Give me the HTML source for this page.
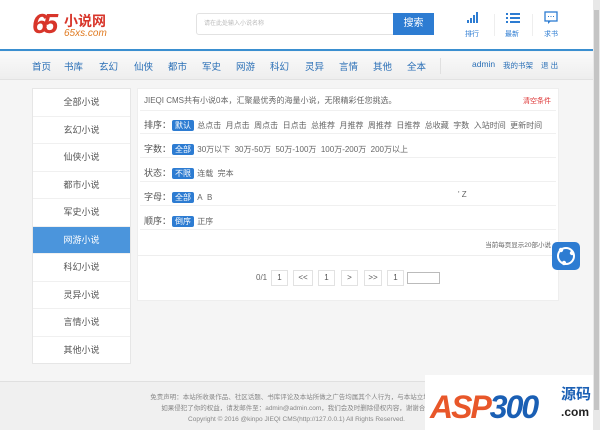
<!DOCTYPE html>
<html><head><meta charset="utf-8"><style>
*{margin:0;padding:0;box-sizing:border-box}
body{width:600px;height:430px;overflow:hidden;background:#f5f5f5;font-family:"Liberation Sans","Noto Sans CJK SC",sans-serif;font-size:9px;color:#555;position:relative}
.hdr{position:absolute;left:0;top:0;width:593px;height:51px;background:#fff;border-bottom:2px solid #3a8fd0}
.nav{position:absolute;left:0;top:52px;width:593px;height:28px;background:linear-gradient(#fafafa,#eee);border-bottom:1px solid #e2e2e2}
.nav span{position:absolute;top:7px;font-size:9.5px;color:#2a6fb6}
.sb{position:absolute;right:0;top:0;width:7px;height:430px;background:#e8e8e8}
.sb i{position:absolute;left:1px;top:10px;width:5px;height:400px;background:#c4c4c4}
.side{position:absolute;left:32px;top:88px;width:99px;height:276px;background:#fff;border:1px solid #e6e6e6}
.side div{height:27.5px;line-height:27.5px;text-align:center;border-bottom:1px solid #f0f0f0;font-size:9px;color:#555}
.side .on{background:#4b95dc;color:#fff}
.main{position:absolute;left:137px;top:88px;width:422px;height:213px;background:#fff;border:1px solid #eee}
.row{position:absolute;left:6px;font-size:8px;color:#666;white-space:nowrap}
.row b{font-weight:normal;font-size:9px;color:#555;margin-right:1px}
.row em{font-style:normal;background:#2d7cd2;color:#fff;padding:1px 3px;border-radius:2px;margin-right:1px}
.line{position:absolute;left:2px;right:2px;height:1px;background:#f0f0f0}
.pg{position:absolute;top:270px;height:16px;border:1px solid #e2e2e2;background:#fff;text-align:center;line-height:14px;font-size:8px;color:#555}
.ft{position:absolute;left:0;top:381px;width:593px;height:49px;background:#f0f0f0;border-top:1px solid #e0e0e0;text-align:center;font-size:6.5px;color:#888;line-height:11px;padding-top:10px}
</style></head><body>
<div class="hdr">
 <div style="position:absolute;left:32px;top:8px;font:italic bold 28px 'Liberation Sans',sans-serif;color:#d8352a;letter-spacing:-5px">65</div>
 <div style="position:absolute;left:64px;top:11px;font-size:14px;font-weight:bold;color:#d8352a">小说网</div>
 <div style="position:absolute;left:64px;top:28px;font:italic 10px 'Liberation Sans',sans-serif;color:#e07a20">65xs.com</div>
 <div style="position:absolute;left:196px;top:13px;width:198px;height:22px;border:1px solid #e2e2e2;border-radius:3px 0 0 3px;font-size:6px;color:#bbb;line-height:20px;padding-left:7px">请在此处输入小说名称</div>
 <div style="position:absolute;left:393px;top:13px;width:41px;height:22px;background:#2d7cd2;color:#fff;font-size:10px;line-height:22px;text-align:center">搜索</div>
 <svg style="position:absolute;left:466px;top:12px" width="14" height="12"><rect x="1" y="8" width="2" height="3" fill="#2d7cd2"/><rect x="4" y="6" width="2" height="5" fill="#2d7cd2"/><rect x="7" y="3" width="2" height="8" fill="#2d7cd2"/><rect x="10" y="0" width="2" height="11" fill="#2d7cd2"/></svg>
 <svg style="position:absolute;left:506px;top:12px" width="14" height="12" fill="#2d7cd2"><rect x="0" y="1" width="2" height="2"/><rect x="4" y="1" width="10" height="2"/><rect x="0" y="5" width="2" height="2"/><rect x="4" y="5" width="10" height="2"/><rect x="0" y="9" width="2" height="2"/><rect x="4" y="9" width="10" height="2"/></svg>
 <svg style="position:absolute;left:544px;top:11px" width="14" height="13"><rect x="1" y="1" width="12" height="9" fill="none" stroke="#2d7cd2" stroke-width="1.3"/><path d="M4 10v3l3-3" fill="#2d7cd2"/><rect x="4" y="5" width="1" height="1" fill="#2d7cd2"/><rect x="6.5" y="5" width="1" height="1" fill="#2d7cd2"/><rect x="9" y="5" width="1" height="1" fill="#2d7cd2"/></svg>
 <div style="position:absolute;left:465px;top:29px;font-size:7px;color:#2d7cd2">排行</div>
 <div style="position:absolute;left:505px;top:29px;font-size:7px;color:#2d7cd2">最新</div>
 <div style="position:absolute;left:544px;top:29px;font-size:7px;color:#2d7cd2">求书</div>
 <div style="position:absolute;left:494px;top:14px;width:1px;height:22px;background:#eee"></div>
 <div style="position:absolute;left:532px;top:14px;width:1px;height:22px;background:#eee"></div>
</div>
<div class="nav">
 <span style="left:32px">首页</span><span style="left:64px">书库</span><span style="left:99px">玄幻</span><span style="left:134px">仙侠</span><span style="left:168px">都市</span><span style="left:202px">军史</span><span style="left:236px">网游</span><span style="left:270px">科幻</span><span style="left:305px">灵异</span><span style="left:339px">言情</span><span style="left:373px">其他</span><span style="left:407px">全本</span>
 <div style="position:absolute;left:440px;top:6px;width:1px;height:16px;background:#e0e0e0"></div>
 <span style="left:472px;font-size:8.5px">admin</span><span style="left:503px;font-size:7.5px;top:8px">我的书架</span><span style="left:541px;font-size:7.5px;top:8px">退 出</span>
</div>
<div class="side"><div>全部小说</div><div>玄幻小说</div><div>仙侠小说</div><div>都市小说</div><div>军史小说</div><div class="on">网游小说</div><div>科幻小说</div><div>灵异小说</div><div>言情小说</div><div style="border:0">其他小说</div></div>
<div class="main">
 <div class="row" style="top:6px;font-size:8px">JIEQI CMS共有小说0本，汇聚最优秀的海量小说，无限精彩任您挑选。</div>
 <div style="position:absolute;right:7px;top:7px;font-size:7px;color:#d33">清空条件</div>
 <div class="line" style="top:21px"></div>
 <div class="row" style="top:29px"><b>排序：</b><em>默认</em> 总点击&nbsp; 月点击&nbsp; 周点击&nbsp; 日点击&nbsp; 总推荐&nbsp; 月推荐&nbsp; 周推荐&nbsp; 日推荐&nbsp; 总收藏&nbsp; 字数&nbsp; 入站时间&nbsp; 更新时间</div>
 <div class="line" style="top:44px"></div>
 <div class="row" style="top:53px"><b>字数：</b><em>全部</em> 30万以下&nbsp; 30万-50万&nbsp; 50万-100万&nbsp; 100万-200万&nbsp; 200万以上</div>
 <div class="line" style="top:68px"></div>
 <div class="row" style="top:77px"><b>状态：</b><em>不限</em> 连载&nbsp; 完本</div>
 <div class="line" style="top:92px"></div>
 <div class="row" style="top:101px"><b>字母：</b><em>全部</em> A&nbsp; B</div>
 <div class="row" style="top:101px;left:320px">' Z</div>
 <div class="line" style="top:116px"></div>
 <div class="row" style="top:125px"><b>顺序：</b><em>倒序</em> 正序</div>
 <div class="line" style="top:140px"></div>
 <div style="position:absolute;right:7px;top:150px;font-size:6.5px;color:#666">当前每页显示20部小说</div>
 <div class="line" style="top:166px;left:0;right:0;background:#eee"></div>
</div>
<div style="position:absolute;left:256px;top:273px;font-size:8px;color:#666">0/1</div>
<div class="pg" style="left:271px;width:17px">1</div>
<div class="pg" style="left:293px;width:20px">&lt;&lt;</div>
<div class="pg" style="left:318px;width:17px">1</div>
<div class="pg" style="left:341px;width:17px">&gt;</div>
<div class="pg" style="left:364px;width:18px">&gt;&gt;</div>
<div class="pg" style="left:387px;width:17px">1</div>
<div class="pg" style="left:407px;width:33px;top:272px;height:12px;border-color:#bbb"></div>
<div style="position:absolute;left:552px;top:242px;width:28px;height:28px;background:#2d7cd2;border-radius:5px"><svg width="28" height="28"><circle cx="14" cy="14" r="8" fill="none" stroke="#fff" stroke-width="2"/><circle cx="9" cy="8" r="2.2" fill="#fff"/><circle cx="20" cy="11" r="2.2" fill="#fff"/><circle cx="12" cy="21" r="2.2" fill="#fff"/></svg></div>
<div class="ft">免责声明：本站所收录作品、社区话题、书库评论及本站所做之广告均属其个人行为，与本站立场无关<br>如果侵犯了你的权益，请发邮件至：admin@admin.com，我们会及时删除侵权内容，谢谢合作<br>Copyright © 2016 @kinpo JIEQI CMS(http://127.0.0.1) All Rights Reserved.</div>
<div style="position:absolute;left:425px;top:375px;width:171px;height:55px;background:#fff">
 <div style="position:absolute;left:5px;top:14px;font:italic bold 32px 'Liberation Sans',sans-serif;color:#e8572a;letter-spacing:-2px">ASP<span style="color:#1a5fb4">300</span></div>
 <div style="position:absolute;left:136px;top:8px;font-size:15px;font-weight:bold;color:#1a5fb4">源码</div>
 <div style="position:absolute;left:136px;top:30px;font-size:12px;font-weight:bold;color:#222">.com</div>
</div>
<div class="sb"><i></i></div>
</body></html>
